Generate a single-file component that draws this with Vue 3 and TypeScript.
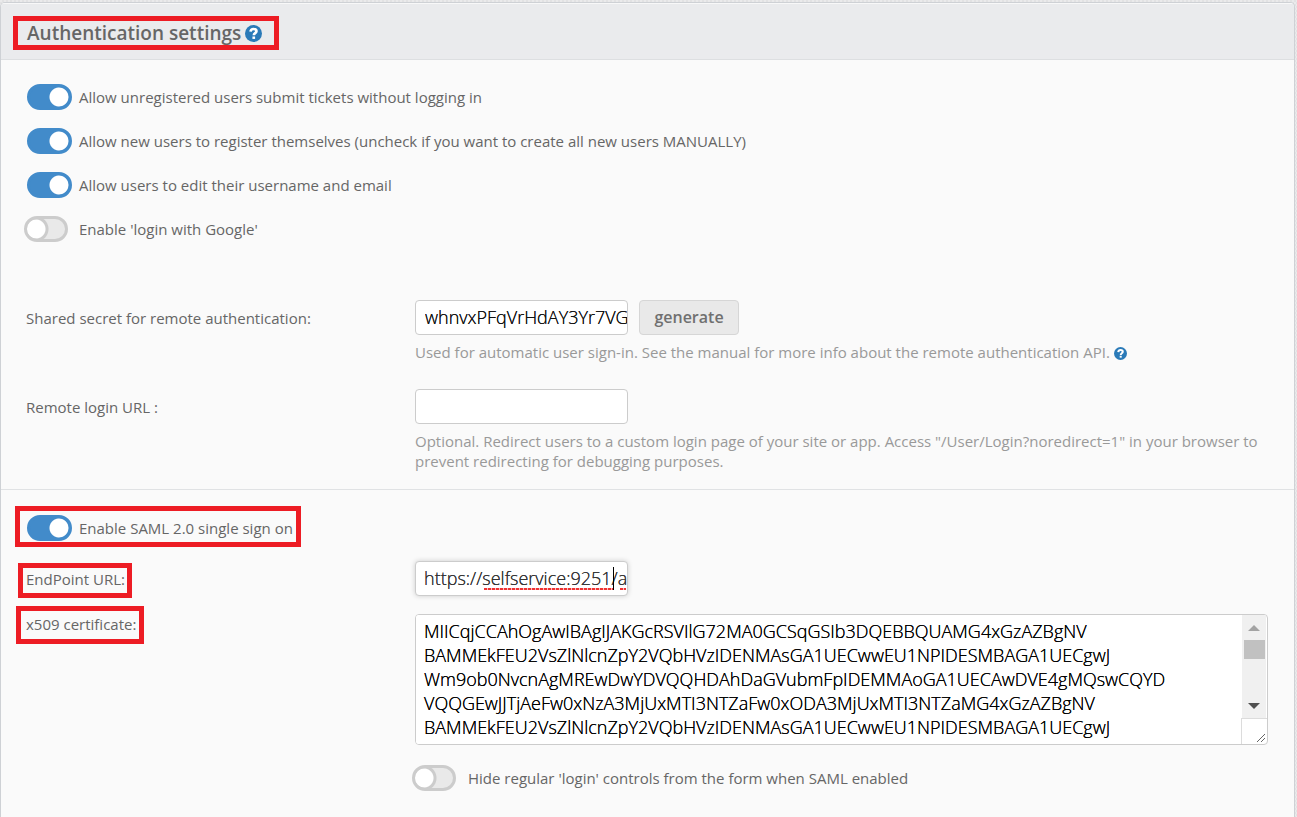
<script setup lang="ts">
import { ref } from 'vue'

interface Toggle {
  id: string
  label: string
  on: boolean
}

const toggles = ref<Toggle[]>([
  { id: 'allow-unregistered', label: 'Allow unregistered users submit tickets without logging in', on: true },
  { id: 'allow-register', label: 'Allow new users to register themselves (uncheck if you want to create all new users MANUALLY)', on: true },
  { id: 'allow-edit', label: 'Allow users to edit their username and email', on: true },
  { id: 'google-login', label: "Enable 'login with Google'", on: false },
])

const sharedSecret = ref('whnvxPFqVrHdAY3Yr7VGk2')
const remoteUrl = ref('')
const samlEnabled = ref(true)
const endpointUrl = ref('https://selfservice:9251/adfs')
const hideLogin = ref(false)
const certificate = ref(
  [
    'MIICqjCCAhOgAwIBAgIJAKGcRSVIlG72MA0GCSqGSIb3DQEBBQUAMG4xGzAZBgNV',
    'BAMMEkFEU2VsZlNlcnZpY2VQbHVzIDENMAsGA1UECwwEU1NPIDESMBAGA1UECgwJ',
    'Wm9ob0NvcnAgMREwDwYDVQQHDAhDaGVubmFpIDEMMAoGA1UECAwDVE4gMQswCQYD',
    'VQQGEwJJTjAeFw0xNzA3MjUxMTI3NTZaFw0xODA3MjUxMTI3NTZaMG4xGzAZBgNV',
    'BAMMEkFEU2VsZlNlcnZpY2VQbHVzIDENMAsGA1UECwwEU1NPIDESMBAGA1UECgwJ',
  ].join('\n'),
)
</script>

<template>
  <main class="panel">
    <header class="panel-head">
      <h1 class="title mark">
        Authentication settings
        <a href="#" class="help-link" aria-label="Help">
          <svg viewBox="0 0 16 16" width="17" height="17" aria-hidden="true">
            <circle cx="8" cy="8" r="8" />
            <path d="M5.2 6.3C5.4 4.5 6.5 3.8 8.1 3.8c1.6 0 2.7.8 2.7 2.1 0 1.8-2.5 1.8-2.5 3.8" />
            <rect x="7" y="10.8" width="2.5" height="2.3" />
          </svg>
        </a>
      </h1>
    </header>

    <section class="toggles">
      <label v-for="t in toggles" :key="t.id" class="switch-row">
        <input :id="t.id" v-model="t.on" type="checkbox" class="switch" />
        <span>{{ t.label }}</span>
      </label>
    </section>

    <section class="remote">
      <div class="field">
        <label for="secret" class="field-label">Shared secret for remote authentication:</label>
        <div class="field-body">
          <div class="inline">
            <input id="secret" v-model="sharedSecret" type="text" class="text" />
            <button type="button" class="generate">generate</button>
          </div>
          <p class="hint">
            Used for automatic user sign-in. See the manual for more info about the remote authentication API.
            <a href="#" class="help-link" aria-label="Remote authentication help">
              <svg viewBox="0 0 16 16" width="13" height="13" aria-hidden="true">
                <circle cx="8" cy="8" r="8" />
                <path d="M5.2 6.3C5.4 4.5 6.5 3.8 8.1 3.8c1.6 0 2.7.8 2.7 2.1 0 1.8-2.5 1.8-2.5 3.8" />
                <rect x="7" y="10.8" width="2.5" height="2.3" />
              </svg>
            </a>
          </p>
        </div>
      </div>
      <div class="field">
        <label for="remote-url" class="field-label">Remote login URL :</label>
        <div class="field-body">
          <input id="remote-url" v-model="remoteUrl" type="text" class="text" />
          <p class="hint">
            Optional. Redirect users to a custom login page of your site or app. Access "/User/Login?noredirect=1" in
            your browser to prevent redirecting for debugging purposes.
          </p>
        </div>
      </div>
    </section>

    <section class="saml">
      <label class="switch-row mark saml-switch">
        <input v-model="samlEnabled" type="checkbox" class="switch" />
        <span>Enable SAML 2.0 single sign on</span>
      </label>

      <div class="field endpoint">
        <div class="field-label">
          <label for="endpoint" class="mark endpoint-mark">EndPoint URL:</label>
        </div>
        <div class="field-body">
          <div class="endpoint-box">
            <input id="endpoint" v-model="endpointUrl" type="text" class="text active" spellcheck="false" />
            <span class="squiggle word" aria-hidden="true"></span>
            <span class="squiggle rest" aria-hidden="true"></span>
            <span class="caret" aria-hidden="true"></span>
          </div>
        </div>
      </div>

      <div class="field certificate">
        <div class="field-label">
          <label for="cert" class="mark cert-mark">x509 certificate:</label>
        </div>
        <div class="field-body">
          <div class="cert-box">
            <textarea id="cert" v-model="certificate" spellcheck="false" wrap="off"></textarea>
            <div class="scrollbar" aria-hidden="true">
              <div class="track">
                <svg class="arrow up" viewBox="0 0 12 6" width="12" height="6"><path d="M0 6 6 0l6 6z" /></svg>
                <div class="thumb"></div>
                <svg class="arrow down" viewBox="0 0 12 6" width="12" height="6"><path d="M0 0h12L6 6z" /></svg>
              </div>
              <div class="corner">
                <svg viewBox="0 0 8 8" width="8" height="8"><path d="M0 8 8 0M4 8l4-4" /></svg>
              </div>
            </div>
          </div>
          <label class="switch-row hide-login">
            <input v-model="hideLogin" type="checkbox" class="switch" />
            <span>Hide regular 'login' controls from the form when SAML enabled</span>
          </label>
        </div>
      </div>
    </section>
  </main>
</template>

<style>
body {
  background: repeating-conic-gradient(#e2e2e3 0% 25%, #eaeaeb 0% 50%) 0 0 / 4px 4px;
}
</style>

<style scoped>
* {
  box-sizing: border-box;
}

.panel {
  margin: 2px 2px 0 0;
  min-height: calc(100vh - 2px);
  border: 1px solid #ced1d5;
  border-bottom: 0;
  border-radius: 5px 5px 0 0;
  background: #fafafa;
  color: #666;
  font: 15px/20px "Open Sans", sans-serif;
  overflow: hidden;
}

.panel-head {
  display: flex;
  height: 57px;
  padding: 13px 12px;
  background: #eaebed;
  border-bottom: 1px solid #dddfe1;
  box-shadow: inset 0 1px #f8f8f8;
}

.mark {
  border: 5px solid #ed1c24;
}

.title {
  display: flex;
  align-items: center;
  gap: 4px;
  height: 34px;
  margin: 0;
  padding: 0 12px 0 9px;
  font-size: 19px;
  line-height: 24px;
  font-weight: 600;
  white-space: nowrap;
}

.help-link {
  display: inline-flex;
  vertical-align: -2px;
}

.help-link circle {
  fill: #2a7ab8;
}

.help-link path {
  fill: none;
  stroke: #fff;
  stroke-width: 2.5;
}

.help-link rect {
  fill: #fff;
}

.toggles {
  display: grid;
  gap: 18px;
  padding: 24px 23px 0;
}

.switch-row {
  display: flex;
  align-items: center;
  height: 26px;
  gap: 7px;
}

.switch {
  appearance: none;
  flex: none;
  width: 45px;
  height: 26px;
  margin: 0 0 0 3px;
  border: 3px solid #428bca;
  border-radius: 13px;
  background: radial-gradient(circle at 29px 10px, #fff 9px, #428bca 10px);
}

.switch:not(:checked) {
  width: 44px;
  margin: 0 4px 0 0;
  border-color: #ccc;
  background: radial-gradient(circle at 9px 10px, #fff 9px, #ccc 10px, #ccc 12px, #e9e9e9 13px);
}

.remote {
  display: grid;
  gap: 27px;
  padding: 58px 26px 18px 25px;
  border-bottom: 1px solid #e0e2e4;
}

.field {
  display: grid;
  grid-template-columns: 389px minmax(0, 1fr);
}

.remote .field-label {
  padding-top: 8px;
}

.inline {
  display: flex;
  gap: 11px;
}

.text {
  display: block;
  width: 213px;
  height: 35px;
  padding: 0 0 2px 9px;
  border: 1px solid #ccc;
  border-radius: 4px;
  background: #fff;
  color: #111;
  font: 300 18px/24px "Open Sans", sans-serif;
  text-shadow: 0 0 0 currentColor;
  outline: 0;
}

.generate {
  width: 100px;
  height: 35px;
  padding: 0 0 2px;
  border: 1px solid #d6d6d6;
  border-radius: 4px;
  background: #e9e9e9;
  color: #707070;
  font: 600 16px/24px "Open Sans", sans-serif;
}

.hint {
  margin: 7px 0 0;
  color: #999;
}

.saml {
  padding: 16px 26px 24px 14px;
}

.saml-switch {
  width: 286px;
  height: 41px;
  padding: 2px 0 0 4px;
}

.saml .field {
  grid-template-columns: 400px minmax(0, 1fr);
}

.endpoint {
  margin-top: 14px;
}

.endpoint-mark,
.cert-mark {
  display: flex;
  align-items: center;
  width: max-content;
}

.endpoint-mark {
  height: 35px;
  margin: 2px 0 0 3px;
  padding: 0 2px 3px 3px;
}

.cert-mark {
  height: 38px;
  padding: 0 3px 2px 5px;
  margin-left: 1px;
}

.endpoint-box {
  position: relative;
  width: 213px;
}

.active {
  padding-left: 8px;
  color: #333;
  box-shadow: 0 0 5px #ccc;
}

.squiggle {
  position: absolute;
  top: 27px;
  height: 2px;
  background: repeating-linear-gradient(90deg, #e33 0 3px, #fbb 3px 4px);
}

.word {
  left: 69px;
  width: 129px;
}

.rest {
  left: 205px;
  width: 6px;
}

.caret {
  position: absolute;
  top: 6px;
  left: 198px;
  width: 1px;
  height: 23px;
  background: #000;
}

.certificate {
  margin-top: 8px;
}

.certificate .field-body {
  padding-top: 8px;
}

.cert-box {
  display: flex;
  height: 131px;
  border: 1px solid #ccc;
  border-radius: 4px;
  background: #fff;
  overflow: hidden;
}

textarea {
  flex: 1;
  min-width: 0;
  padding: 4px 8px;
  border: 0;
  outline: 0;
  resize: none;
  overflow: hidden;
  background: #fff;
  color: #000;
  font: 300 18px/24px "Open Sans", sans-serif;
  text-shadow: 0 0 0 currentColor;
}

.scrollbar {
  display: flex;
  flex-direction: column;
  width: 26px;
}

.track {
  display: flex;
  flex: 1;
  flex-direction: column;
  align-items: center;
  margin: 0 1px;
  padding: 10px 0 9px;
  background: #f0f0f0;
}

.arrow.up {
  fill: #a3a3a3;
}

.arrow.down {
  margin-top: auto;
  fill: #505050;
}

.thumb {
  width: 21px;
  height: 19px;
  margin-top: 9px;
  background: #c1c1c1;
}

.corner {
  display: flex;
  align-items: flex-end;
  justify-content: flex-end;
  height: 26px;
  padding: 2px;
  border: solid #dcdcdc;
  border-width: 1px 0 0 1px;
}

.corner path {
  fill: none;
  stroke: #666;
}

.hide-login {
  gap: 8px;
  margin: 20px 0 0 -3px;
}
</style>
